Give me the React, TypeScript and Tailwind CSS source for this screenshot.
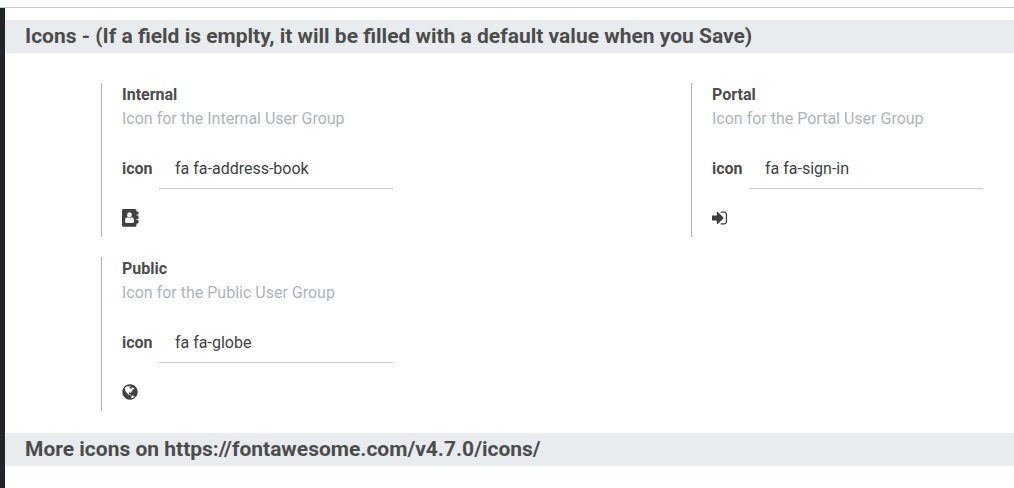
import type { ReactNode } from "react";

const globePath =
  "M896 128q209 0 385.5 103t279.5 279.5 103 385.5-103 385.5-279.5 279.5-385.5 103-385.5-103-279.5-279.5-103-385.5 103-385.5 279.5-279.5 385.5-103zm274 521q-2 1-9.5 9.5t-13.5 9.5q2 0 4.5-5t5-11 3.5-7q6-7 22-15 14-6 52-12 34-8 51 11-2-2 9.5-13t14.5-12q3-2 15-4.5t15-7.5l2-22q-12 1-17.5-7t-6.5-21q0 2-6 8 0-7-4.5-8t-11.5 1-9 1q-10-3-15-7.5t-8-16.5-4-15q-2-5-9.5-10.5t-9.5-10.5q-1-2-2.5-5.5t-3-6.5-4-5.5-5.5-2.5-7 5-7.5 10-4.5 5q-3-2-6-1.5t-4.5 1-4.5 3-5 3.5q-3 2-8.5 3t-8.5 2q15-5-1-11-10-4-16-3 9-4 7.5-12t-8.5-14h5q-1-4-8.5-8.5t-17.5-8.5-13-6q-8-5-34-9.5t-33-.5q-5 6-4.5 10.5t4 14 3.5 12.5q1 6-5.5 13t-6.5 12q0 7 14 15.5t10 21.5q-3 8-16 16t-16 12q-5 8-1.5 18.5t10.5 16.5q2 2 1.5 4t-3.5 4.5-5.5 4-6.5 3.5l-3 2q-11 5-20.5-6t-13.5-26q-7-25-16-30-23-8-29 1-5-13-41-26-25-9-58-4 6-1 0-15-7-15-19-12 3-6 4-17.5t1-13.5q3-13 12-23 1-1 7-8.5t9.5-13.5.5-6q35 4 50-11 5-5 11.5-17t10.5-17q9-6 14-5.5t14.5 5.5 14.5 5q14 1 15.5-11t-7.5-20q12 1 3-17-4-7-8-9-12-4-27 5-8 4 2 8-1-1-9.5 10.5t-16.5 17.5-16-5q-1-1-5.5-13.5t-9.5-13.5q-8 0-16 15 3-8-11-15t-24-8q19-12-8-27-7-4-20.5-5t-19.5 4q-5 7-5.5 11.5t5 8 10.5 5.5 11.5 4 8.5 3q14 10 8 14-2 1-8.5 3.5t-11.5 4.5-6 4q-3 4 0 14t-2 14q-5-5-9-17.5t-7-16.5q7 9-25 6l-10-1q-4 0-16 2t-20.5 1-13.5-8q-4-8 0-20 1-4 4-2-4-3-11-9.5t-10-8.5q-46 15-94 41 6 1 12-1 5-2 13-6.5t10-5.5q34-14 42-7l5-5q14 16 20 25-7-4-30-1-20 6-22 12 7 12 5 18-4-3-11.5-10t-14.5-11-15-5q-16 0-22 1-146 80-235 222 7 7 12 8 4 1 5 9t2.5 11 11.5-3q9 8 3 19 1-1 44 27 19 17 21 21 3 11-10 18-1-2-9-9t-9-4q-3 5 .5 18.5t10.5 12.5q-7 0-9.5 16t-2.5 35.5-1 23.5l2 1q-3 12 5.5 34.5t21.5 19.5q-13 3 20 43 6 8 8 9 3 2 12 7.5t15 10 10 10.5q4 5 10 22.5t14 23.5q-2 6 9.5 20t10.5 23q-1 0-2.5 1t-2.5 1q3 7 15.5 14t15.5 13q1 3 2 10t3 11 8 2q2-20-24-62-15-25-17-29-3-5-5.5-15.5t-4.5-14.5q2 0 6 1.5t8.5 3.5 7.5 4 2 3q-3 7 2 17.5t12 18.5 17 19 12 13q6 6 14 19.5t0 13.5q9 0 20 10.5t17 19.5q5 8 8 26t5 24q2 7 8.5 13.5t12.5 9.5l16 8 13 7q5 2 18.5 10.5t21.5 11.5q10 4 16 4t14.5-2.5 13.5-3.5q15-2 29 15t21 21q36 19 55 11-2 1 .5 7.5t8 15.5 9 14.5 5.5 8.5q5 6 18 15t18 15q6-4 7-9-3 8 7 20t18 10q14-3 14-32-31 15-49-18 0-1-2.5-5.5t-4-8.5-2.5-8.5 0-7.5 5-3q9 0 10-3.5t-2-12.5-4-13q-1-8-11-20t-12-15q-5 9-16 8t-16-9q0 1-1.5 5.5t-1.5 6.5q-13 0-15-1 1-3 2.5-17.5t3.5-22.5q1-4 5.5-12t7.5-14.5 4-12.5-4.5-9.5-17.5-2.5q-19 1-26 20-1 3-3 10.5t-5 11.5-9 7q-7 3-24 2t-24-5q-13-8-22.5-29t-9.5-37q0-10 2.5-26.5t3-25-5.5-24.5q3-2 9-9.5t10-10.5q2-1 4.5-1.5t4.5 0 4-1.5 3-6q-1-1-4-3-3-3-4-3 7 3 28.5-1.5t27.5 1.5q15 11 22-2 0-1-2.5-9.5t-.5-13.5q5 27 29 9 3 3 15.5 5t17.5 5q3 2 7 5.5t5.5 4.5 5-.5 8.5-6.5q10 14 12 24 11 40 19 44 7 3 11 2t4.5-9.5 0-14-1.5-12.5l-1-8v-18l-1-8q-15-3-18.5-12t1.5-18.5 15-18.5q1-1 8-3.5t15.5-6.5 12.5-8q21-19 15-35 7 0 11-9-1 0-5-3t-7.5-5-4.5-2q9-5 2-16 5-3 7.5-11t7.5-10q9 12 21 2 7-8 1-16 5-7 20.5-10.5t18.5-9.5q7 2 8-2t1-12 3-12q4-5 15-9t13-5l17-11q3-4 0-4 18 2 31-11 10-11-6-20 3-6-3-9.5t-15-5.5q3-1 11.5-.5t10.5-1.5q15-10-7-16-17-5-43 12zm-163 877q206-36 351-189-3-3-12.5-4.5t-12.5-3.5q-18-7-24-8 1-7-2.5-13t-8-9-12.5-8-11-7q-2-2-7-6t-7-5.5-7.5-4.5-8.5-2-10 1l-3 1q-3 1-5.5 2.5t-5.5 3-4 3 0 2.5q-21-17-36-22-5-1-11-5.5t-10.5-7-10-1.5-11.5 7q-5 5-6 15t-2 13q-7-5 0-17.5t2-18.5q-3-6-10.5-4.5t-12 4.5-11.5 8.5-9 6.5-8.5 5.5-8.5 7.5q-3 4-6 12t-5 11q-2-4-11.5-6.5t-9.5-5.5q2 10 4 35t5 38q7 31-12 48-27 25-29 40-4 22 12 26 0 7-8 20.5t-7 21.5q0 6 2 16z";

const signInPath =
  "M1301 896q0 26-19 45l-544 544q-19 19-45 19t-45-19-19-45v-288h-448q-26 0-45-19t-19-45v-384q0-26 19-45t45-19h448v-288q0-26 19-45t45-19 45 19l544 544q19 19 19 45zm352-352v704q0 119-84.5 203.5t-203.5 84.5h-320q-13 0-22.5-9.5t-9.5-22.5q0-4-1-20t-.5-26.5 3-23.5 10-19.5 20.5-6.5h320q66 0 113-47t47-113v-704q0-66-47-113t-113-47h-312l-11.5-1-11.5-3-8-5.5-7-9-2-13.5q0-4-1-20t-.5-26.5 3-23.5 10-19.5 20.5-6.5h320q119 0 203.5 84.5t84.5 203.5z";

function AddressBook() {
  return (
    <svg viewBox="0 0 17 18" className="h-[18px] w-[17px]" fill="currentColor" aria-hidden="true">
      <path
        fillRule="evenodd"
        d="M1.5 0H13Q14.5 0 14.5 1.5V2.5H16Q16.5 2.5 16.5 3V5Q16.5 5.5 16 5.5H14.5V6.5H16Q16.5 6.5 16.5 7V9.5Q16.5 10 16 10H14.5V11H16Q16.5 11 16.5 11.5V14Q16.5 14.5 16 14.5H14.5V16.2Q14.5 17.7 13 17.7H1.5Q0 17.7 0 16.2V1.5Q0 0 1.5 0Z M7.5 3.2A2.3 2.6 0 0 0 5.2 5.8A2.3 2.6 0 0 0 7.5 8.4A2.3 2.6 0 0 0 9.8 5.8A2.3 2.6 0 0 0 7.5 3.2Z M5.4 8.3Q3 8.4 3 12.2Q3 14.1 4.6 14.1H10.4Q12 14.1 12 12.2Q12 8.4 9.6 8.3Q7.5 9.9 5.4 8.3Z"
      />
    </svg>
  );
}

function SignIn() {
  return (
    <svg viewBox="181 0 1536 1792" className="h-[18px] w-4" fill="currentColor" aria-hidden="true">
      <path d={signInPath} />
    </svg>
  );
}

function Globe() {
  return (
    <svg viewBox="128 0 1536 1792" className="h-[18px] w-4" fill="currentColor" aria-hidden="true">
      <path d={globePath} />
    </svg>
  );
}

type Group = { id: string; title: string; value: string; icon: ReactNode };

const groups: Group[] = [
  { id: "internal", title: "Internal", value: "fa fa-address-book", icon: <AddressBook /> },
  { id: "portal", title: "Portal", value: "fa fa-sign-in", icon: <SignIn /> },
  { id: "public", title: "Public", value: "fa fa-globe", icon: <Globe /> },
];

function Setting({ id, title, value, icon }: Group) {
  return (
    <div className="border-l border-[#b4b4b4] pb-2.5 pl-5">
      <h3 className="font-bold">{title}</h3>
      <p className="text-[#adb5bd]">Icon for the {title} User Group</p>
      <div className="mt-[18px] flex items-center">
        <label htmlFor={id} className="w-[37px] font-bold">
          icon
        </label>
        <input
          id={id}
          type="text"
          defaultValue={value}
          className="h-10 w-[234px] border-b border-[#ccc] bg-transparent px-4 text-[#3f4245] outline-none"
        />
      </div>
      <div className="mt-5 text-[#404040]">{icon}</div>
    </div>
  );
}

function SectionTitle({ children }: { children: ReactNode }) {
  return <h2 className="bg-[#e9ecef] pl-5 text-[21px] leading-[33px] font-bold">{children}</h2>;
}

export default function App() {
  return (
    <div className="flex min-h-screen flex-col bg-white pt-[7px] font-['Roboto',sans-serif] text-base text-[#4c4c4c]">
      <div className="flex grow border-t border-[#ccc]">
        <div className="w-[5px] shrink-0 bg-[#212529]" />
        <main className="min-w-0 grow pt-3">
          <SectionTitle>Icons - (If a field is emplty, it will be filled with a default value when you Save)</SectionTitle>
          <div className="grid grid-cols-[590px_minmax(0,1fr)] gap-y-5 pt-[30px] pb-[22px] pl-24">
            {groups.map((group) => (
              <Setting key={group.id} {...group} />
            ))}
          </div>
          <SectionTitle>More icons on https://fontawesome.com/v4.7.0/icons/</SectionTitle>
        </main>
      </div>
    </div>
  );
}
